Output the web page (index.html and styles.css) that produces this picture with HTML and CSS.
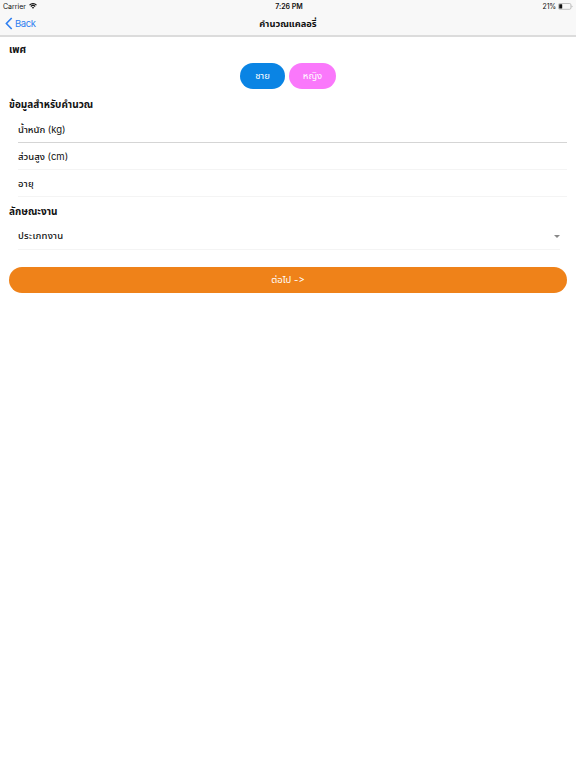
FILE: index.html
```
<!DOCTYPE html>
<html lang="th">
<head>
    <meta charset="UTF-8">
    <meta name="viewport" content="width=device-width, initial-scale=1.0">
    <title>คำนวณแคลอรี่</title>
    <link rel="stylesheet" href="styles.css">
</head>
<body>
    <header class="header">
        <div class="status-bar">
            <div class="carrier">
                <span>Carrier</span>
                <svg class="wifi" viewBox="0 0 16 12">
                    <path d="M1 4.2a10 10 0 0 1 14 0M3.6 7a6.3 6.3 0 0 1 8.8 0" fill="none" stroke="#111" stroke-width="2.2"/>
                    <path d="M5.5 9.1a3.6 3.6 0 0 1 5 0L8 11.7z" fill="#111"/>
                </svg>
            </div>
            <div class="time">7:26 PM</div>
            <div class="battery-info">
                <span>21%</span>
                <svg class="battery" viewBox="0 0 15 7">
                    <rect x="0.5" y="0.5" width="12.4" height="5.8" rx="1.3" fill="none" stroke="#aaa" stroke-width="0.7"/>
                    <rect x="1.2" y="1.2" width="3" height="4.4" rx="0.4" fill="#111"/>
                    <path d="M13.7 2.4v2a1.2 1.2 0 0 0 0-2z" fill="#999"/>
                </svg>
            </div>
        </div>
        <nav class="navbar">
            <a class="back">
                <svg viewBox="0 0 8 13"><path d="M6.7 1 1.4 6.5 6.7 12" fill="none" stroke="#2f7ff0" stroke-width="1.6"/></svg>
                <span>Back</span>
            </a>
            <h1>คำนวณแคลอรี่</h1>
        </nav>
    </header>

    <main class="content">
        <h2 class="gender-title">เพศ</h2>
        <div class="gender">
            <button class="btn male">ชาย</button>
            <button class="btn female">หญิง</button>
        </div>

        <h2 class="info-title">ข้อมูลสำหรับคำนวณ</h2>
        <div class="item item-dark"><span>น้ำหนัก <span class="unit">(kg)</span></span></div>
        <div class="item"><span>ส่วนสูง <span class="unit">(cm)</span></span></div>
        <div class="item"><span class="age">อายุ</span></div>

        <h2 class="work-title">ลักษณะงาน</h2>
        <div class="item picker">
            <span class="work">ประเภทงาน</span>
            <span class="arrow"></span>
        </div>

        <button class="btn next">ต่อไป -&gt;</button>
    </main>
</body>
</html>
```
FILE: styles.css
```
* {
    box-sizing: border-box;
}

body {
    margin: 0;
    background: #fff;
    color: #111;
    font-family: Inter, "Noto Sans Thai", "Loma", sans-serif;
    font-size: 9.5px;
    font-feature-settings: "calt" 0;
}

.header {
    height: 37px;
    background: #f8f8f8;
    border-bottom: 2px solid #dcdcdc;
}

.status-bar {
    display: grid;
    grid-template-columns: 1fr auto 1fr;
    align-items: center;
    height: 12px;
    padding: 0 3px;
    font-size: 7px;
}

.carrier,
.battery-info {
    display: flex;
    align-items: center;
    gap: 3px;
}

.battery-info {
    justify-content: flex-end;
    gap: 2px;
    letter-spacing: -0.2px;
}

.time {
    padding-left: 2px;
    font-weight: 600;
}

.wifi {
    width: 8px;
    height: 6px;
}

.battery {
    width: 15px;
    height: 7px;
}

.navbar {
    display: grid;
    grid-template-columns: 1fr auto 1fr;
    align-items: center;
    height: 23px;
    padding: 0 5px;
}

.back {
    display: flex;
    align-items: center;
    gap: 2px;
    color: #2f7ff0;
    font-size: 9.5px;
    letter-spacing: -0.4px;
}

.back svg {
    width: 8px;
    height: 13px;
}

h1,
h2 {
    margin: 0;
    font-size: 10px;
    font-weight: 700;
    line-height: 16px;
    white-space: nowrap;
}

h1 {
    font-size: 9.3px;
}

.content {
    padding: 4px 9px 0;
}

.gender {
    display: flex;
    justify-content: center;
    gap: 4px;
    margin: 6px 0 7px;
}

.btn {
    height: 26px;
    padding: 0;
    border: none;
    border-radius: 13px;
    color: #fff;
    font-family: inherit;
    font-size: 9.5px;
    font-feature-settings: inherit;
}

.male {
    width: 45px;
    background: #0a84e4;
}

.female {
    width: 47px;
    background: #fa78fb;
}

.item {
    display: flex;
    align-items: center;
    height: 27px;
    margin-left: 9px;
    padding-top: 2px;
    border-bottom: 1px solid #f4f4f4;
    font-weight: 500;
    white-space: nowrap;
}

.info-title {
    margin-bottom: 4px;
}

.item-dark {
    border-bottom-color: #d5d5d5;
}

.unit {
    font-weight: 400;
}

.age {
    letter-spacing: 0.3px;
}

.work-title {
    margin: 6px 0 4px;
}

.picker {
    justify-content: space-between;
    margin-right: 7px;
    padding-top: 0;
}

.work {
    letter-spacing: 0.2px;
}

.arrow {
    border: 3px solid transparent;
    border-top: 3px solid #888;
    border-bottom: none;
}

.next {
    display: block;
    width: 100%;
    margin-top: 17px;
    background: #ef8219;
}
```
